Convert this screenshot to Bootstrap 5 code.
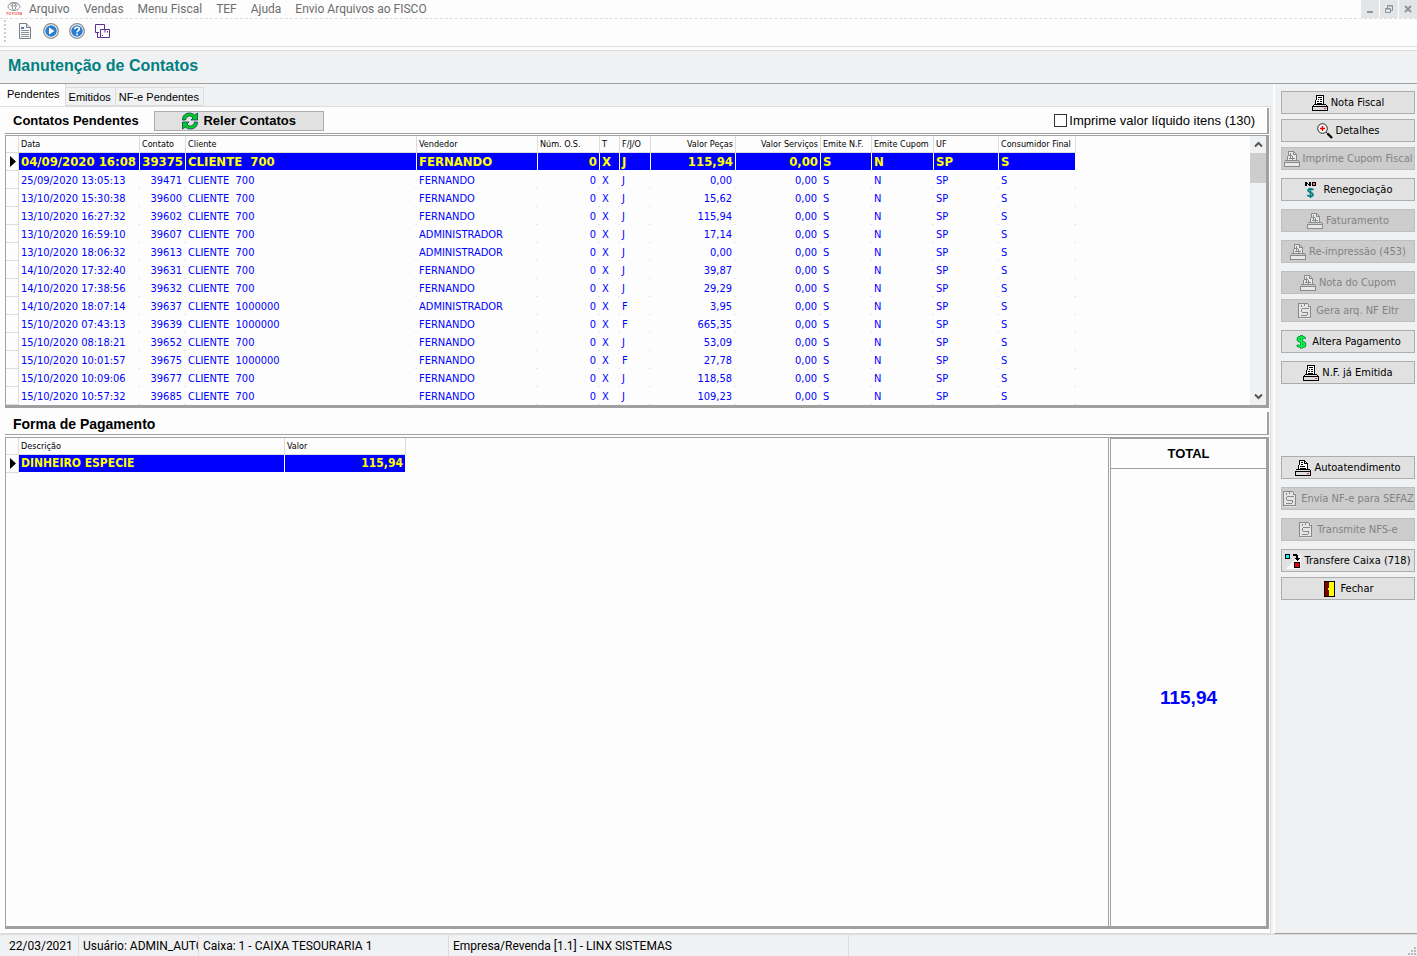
<!DOCTYPE html>
<html lang="pt-BR">
<head>
<meta charset="utf-8">
<meta name="viewport" content="width=device-width, initial-scale=1">
<title>Manutenção de Contatos</title>
<link rel="stylesheet" href="https://cdn.jsdelivr.net/npm/bootstrap@5.3.0/dist/css/bootstrap.min.css">
<script src="https://cdn.jsdelivr.net/npm/bootstrap@5.3.0/dist/js/bootstrap.bundle.min.js"></script>
<style>
:root{--face:#f0f1f3;--paper:#fdfdfd;--edge:#a0a0a0;--soft:#dcdcdc;--tahoma:"DejaVu Sans Condensed","DejaVu Sans",sans-serif;--arial:"Liberation Sans",Arial,sans-serif;--segoe:Roboto,"Open Sans",sans-serif}
body{background:var(--face);color:#000;font-family:var(--tahoma);font-size:11px;line-height:16px}
svg{display:block;flex:none}
.menubar{height:19px;background:var(--paper);border-bottom:1px dashed #ddd;font:12px/18px var(--segoe)}
.menubar .nav{padding-left:0}
.menubar .nav-link{color:#6d6d6d;padding:0 7px}
.menubar .logo{margin-left:6px}
.winbtns{gap:1px}
.winbtn{width:18px;height:18px;border:0;padding:0;background:#e3e5e7;display:grid;place-items:center}
.toolstrip{height:28px;background:var(--paper);border-bottom:1px solid var(--soft);padding:0 0 3px 4px;gap:10px}
.toolstrip .grip{border-left:2px dotted #ccc;height:22px;margin-right:2px}
.toolstrip button{border:0;padding:0;background:none}
.titlebar{height:37px;border-top:3px solid var(--paper);border-bottom:1px solid var(--edge);box-shadow:inset 0 1px #ddd}
.titlebar h1{font:bold 16px/32px var(--arial);color:#008080;margin:0;padding-left:8px}
.content-area{min-width:0}
.tabs{height:22px;font:11px/18px var(--arial)}
.tabs .nav-link{color:#000;padding:0 4px 0 3px;border:1px solid var(--soft);border-left:0;border-radius:0;height:19px;background:var(--face)}
.tabs .nav-link.active{height:22px;padding:1px 5px 1px 7px;background:var(--paper);border-top:0;border-bottom:0;line-height:19px}
.sheet{background:var(--paper);border:1px solid var(--soft);border-left:0;padding:1px 1px 0 5px}
.sect{border-bottom:1px solid var(--edge);border-right:2px solid var(--edge);padding:0 12px 0 8px;margin-bottom:2px}
.sect h2{font:bold 13px/20px var(--arial);margin:0}
.sect-top{height:26px;gap:15px;margin-bottom:1px}
.sect-pay{height:23px;padding-top:2px}
.sect-pay h2{font-size:14px}
.reload{width:170px;height:20px;border:1px solid #adadad;background:#e1e1e1;padding:0;font:bold 13px/18px var(--arial);gap:4px}
.liquid{font:13px/18px var(--arial);gap:2px}
.liquid input{appearance:none;width:13px;height:13px;border:1px solid #333;background:#fff;margin:0}
.liquid input:checked{background:#06c}
.frame{border:1px solid var(--edge);border-right:3px solid var(--edge);border-bottom:3px solid var(--edge)}
.paylist{border-right:1px solid var(--edge)}
.grid-tbl{table-layout:fixed;border-collapse:separate;border-spacing:0;color:#00f;white-space:pre}
#contacts{width:1070px}
#payments{width:400px}
.grid-tbl th{font-size:9px;font-weight:400;line-height:16px;height:17px;color:#000;padding:0 2px;border-right:1px solid var(--soft);border-bottom:1px solid var(--soft);overflow:hidden}
.grid-tbl td{height:18px;line-height:17px;padding:0 4px 0 2px;overflow:hidden;background:linear-gradient(#e6e6e6,#e6e6e6) no-repeat right bottom/2px 1px}
.grid-tbl td:first-child{background:none;border-right:1px solid var(--soft);border-bottom:1px solid var(--soft);padding:0 0 0 4px}
.grid-tbl .sel td+td{background:#00f;color:#ff0;font-weight:700;font-size:13px;border-right:1px solid #fff;border-bottom:1px solid #fff;padding-right:2px}
.grid-tbl .pay td+td{font-size:12px}
.c-mark{width:13px}.c-desc{width:266px}.c-val{width:121px}
.num{text-align:right}
.vbar{width:16px;background:var(--face)}
.vbar button{border:0;background:none;height:17px;padding:0;display:grid;place-items:center}
.vbar .thumb{height:30px;background:#cdcdcd}
.total{width:156px;border-left:1px solid var(--edge);margin-left:1px}
.total h3{font:bold 13px/29px var(--arial);margin:0;border-bottom:1px solid var(--edge);border-top:1px solid var(--edge)}
.total output{font:bold 19px/24px var(--arial);color:#00f}
.actions{width:144px;margin-left:2px;padding:7px 2px 0 6px;border-left:2px solid var(--paper);border-bottom:1px solid var(--edge)}
.act{width:100%;height:23px;border:1px solid #adadad;background:#e1e1e1;padding:0;margin-top:8px;font-size:11px;line-height:20px;gap:3px;color:#000;white-space:nowrap;display:flex;align-items:center;justify-content:center}
.act:first-child{margin-top:0}
.act.snug{margin-top:5px}
.act.apart{margin-top:72px}
.act:disabled{background:#ccc;border-color:#bfbfbf;color:#838383}
.status{height:22px;border-top:1px solid var(--soft);font:12px/23px var(--segoe);white-space:nowrap}
.status span{overflow:hidden;border-right:1px solid var(--soft);padding-left:4px}
.status .w-date{width:79px;padding-left:9px}.w-user{width:120px}.w-cash{width:250px}.w-firm{width:400px}
</style>
</head>
<body class="d-flex flex-column min-vh-100">
<svg width="0" height="0" class="position-absolute" aria-hidden="true">
 <symbol id="printer" viewBox="0 0 16 16" shape-rendering="crispEdges"><path d="M4 0h8v9H3V6h1z" fill="#fff"/><path d="M4 0h8v1H4zM4 1h1v4H4zM3 5h1v4H3zM11 1h1v8h-1zM6 2h4v1H6zM6 4h1v1H6zM8 4h2v1H8zM5 6h2v1H5zM8 6h2v1H8zM5 8h5v1H5z"/><path d="M1 9h14v6H0v-5h1z" fill="#ddd"/><path d="M2 9h12v1H2zM1 10h1v1H1zM14 10h1v1h-1zM0 11h16v1H0zM0 12h1v3H0zM15 12h1v3h-1zM0 15h16v1H0z"/><path d="M12 13h2v1h-2z" fill="#e33"/></symbol>
 <symbol id="printer-page" viewBox="0 0 16 16" shape-rendering="crispEdges"><path d="M4 0h6l3 3v6H3z" fill="#fff"/><path d="M4 0h6v1H4zM4 1h1v4H4zM3 5h1v4H3zM9 1h1v3H9zM10 3h3v1h-3zM10 1h1v1h-1zM11 2h1v1h-1zM12 4h1v5h-1zM6 2h2v1H6zM6 4h2v1H6zM5 6h5v1H5zM5 8h6v1H5z"/><path d="M1 9h14v6H0v-5h1z" fill="#ddd"/><path d="M1 9h14v1H1zM0 11h16v1H0zM0 12h1v3H0zM15 10h1v5h-1zM0 15h16v1H0z"/><path d="M12 13h2v1h-2z" fill="#e33"/></symbol>
 <symbol id="printer-off" viewBox="0 0 16 16" shape-rendering="crispEdges"><path d="M4 1h6l3 3v5H3zM0 11h16v5H0z" fill="#e8e8e8"/><path d="M4 0h6v1H4zM4 1h1v4H4zM3 5h1v4H3zM9 1h1v3H9zM10 3h3v1h-3zM10 1h1v1h-1zM11 2h1v1h-1zM12 4h1v5h-1zM6 2h1v6H6zM8 5h1v4H8zM5 4h3v1H5zM5 7h6v1H5zM1 9h14v1H1zM0 11h16v1H0zM0 12h1v3H0zM15 10h1v5h-1zM0 15h16v1H0z" fill="#8a8a8a"/></symbol>
 <symbol id="file-off" viewBox="0 0 16 16" shape-rendering="crispEdges"><path d="M2 1h9l3 3v12H2z" fill="#e4e4e4"/><path d="M1 0h10v1H1zM1 1h1v14H1zM11 1h1v3h-1zM12 3h2v1h-2zM13 4h1v11h-1zM1 14h13v1H1zM4 2h1v2H4zM7 1h1v2H7zM5 5h7v1H5zM4 6h1v3H4zM5 9h5v1H5zM10 9h1v3h-1zM4 12h6v1H4z" fill="#8a8a8a"/></symbol>
</svg>

<header>
 <nav class="menubar d-flex">
  <svg class="logo" width="16" height="18" viewBox="0 0 16 18"><g fill="none" stroke="#999"><ellipse cx="8" cy="6.500" rx="6" ry="4"/><ellipse cx="8" cy="4.500" rx="4" ry="1.600"/><ellipse cx="8" cy="6.500" rx="1.800" ry="3.600"/></g><text x="0" y="14.500" font-size="4" font-weight="bold" font-family="Liberation Sans" fill="#e55">TOYOTA</text></svg>
  <div class="nav flex-grow-1">
   <a class="nav-link" href="#">Arquivo</a><a class="nav-link" href="#">Vendas</a><a class="nav-link" href="#">Menu Fiscal</a><a class="nav-link" href="#">TEF</a><a class="nav-link" href="#">Ajuda</a><a class="nav-link" href="#">Envio Arquivos ao FISCO</a>
  </div>
  <div class="winbtns d-flex">
   <button class="winbtn" aria-label="Minimizar"><svg width="10" height="10"><path d="M2 8h6" stroke="#8795a1" stroke-width="2"/></svg></button>
   <button class="winbtn" aria-label="Restaurar"><svg width="10" height="10" fill="none" stroke="#8795a1"><path d="M1.500 4.500h5v4h-5zM1 5h6M3.500 4V1.500h5v5H7M3 2h6"/></svg></button>
   <button class="winbtn" aria-label="Fechar janela"><svg width="10" height="10"><path d="M2 2l6 6M8 2L2 8" stroke="#8795a1" stroke-width="2"/></svg></button>
  </div>
 </nav>
 <div class="toolstrip d-flex align-items-center">
  <span class="grip"></span>
  <button aria-label="Documento"><svg width="15" height="17" viewBox="0 0 15 17"><path d="M1.500.5h7l4 4v11h-11z" fill="#f6f8fa" stroke="#7a7f88"/><path d="M8.500.5v4h4" fill="#ddd" stroke="#7a7f88"/><path d="M3 4h3v2H3z" fill="#5d7f9f"/><path d="M3 7.500h8M3 9.500h8M3 11.500h8M3 13.500h8" stroke="#8b929c"/></svg></button>
  <button aria-label="Executar"><svg width="16" height="16" viewBox="0 0 16 16"><circle cx="8" cy="8" r="7.300" fill="#fff" stroke="#8a8a8a" stroke-width="1.300"/><circle cx="8" cy="8" r="5.800" fill="#2b7fd0"/><path d="M6 4.500L11.500 8 6 11.500z" fill="#fff"/></svg></button>
  <button aria-label="Ajuda"><svg width="16" height="16" viewBox="0 0 16 16"><circle cx="8" cy="8" r="7.300" fill="#fff" stroke="#8a8a8a" stroke-width="1.300"/><circle cx="8" cy="8" r="5.800" fill="#2b7fd0"/><path d="M5.800 6.300C5.800 3.600 10.300 3.600 10.300 6.200 10.300 7.700 8 7.600 8 9.500M8 10.500v1.700" fill="none" stroke="#fff" stroke-width="1.600"/></svg></button>
  <button aria-label="Janelas"><svg width="16" height="16" viewBox="0 0 16 16" fill="none" stroke="#5c2d91"><path d="M4 9.500H.5v-8h9V6M2.500 10v4.500H5M5.500 6.500h9v8h-9zM10 7v2.500M12.500 8v1.500M7 12.500h1"/></svg></button>
 </div>
 <div class="titlebar"><h1>Manutenção de Contatos</h1></div>
</header>

<main class="d-flex flex-grow-1">
 <section class="content-area d-flex flex-column flex-grow-1">
  <nav class="nav tabs align-items-end">
   <a class="nav-link active" href="#">Pendentes</a><a class="nav-link" href="#">Emitidos</a><a class="nav-link" href="#">NF-e Pendentes</a>
  </nav>
  <div class="sheet d-flex flex-column flex-grow-1">
   <div class="sect sect-top d-flex align-items-center">
    <h2>Contatos Pendentes</h2>
    <button class="reload d-flex align-items-center justify-content-center"><svg width="18" height="18" viewBox="0 0 18 18"><g stroke="#002b50" stroke-width=".7" fill="#0c2"><path d="M1.500 8C1.500 3 5 1 8.500 1 11 1 12.500 2 13.500 3L16.500 1v7H10l2-2C11 4.500 9.500 4 8.500 4 6.500 4 5 5.500 4.500 8z"/><path d="M16.500 10c0 5-3.500 7-7 7-2.500 0-4-1-5-2L1.500 17v-7H8l-2 2c1 1.500 2.500 2 3.500 2 2 0 3.500-1.500 4-4z"/></g></svg>Reler Contatos</button>
    <label class="liquid d-flex align-items-center ms-auto"><input type="checkbox">Imprime valor líquido itens (130)</label>
   </div>
   <div class="frame d-flex">
    <div class="flex-grow-1 overflow-hidden">
     <table class="grid-tbl" id="contacts">
      <colgroup></colgroup>
      <thead><tr><th></th><th>Data</th><th>Contato</th><th>Cliente</th><th>Vendedor</th><th>Núm. O.S.</th><th>T</th><th>F/J/O</th><th class="num">Valor Peças</th><th class="num">Valor Serviços</th><th>Emite N.F.</th><th>Emite Cupom</th><th>UF</th><th>Consumidor Final</th></tr></thead>
      <tbody></tbody>
     </table>
    </div>
    <div class="vbar d-flex flex-column">
     <button aria-label="Subir"><svg width="9" height="7"><path d="M1 5.500L4.500 2 8 5.500" fill="none" stroke="#555" stroke-width="2"/></svg></button>
     <div class="thumb"></div>
     <button class="mt-auto" aria-label="Descer"><svg width="9" height="7"><path d="M1 1.500L4.500 5 8 1.500" fill="none" stroke="#555" stroke-width="2"/></svg></button>
    </div>
   </div>
   <div class="sect sect-pay mt-1"><h2>Forma de Pagamento</h2></div>
   <div class="frame d-flex flex-grow-1 mb-1">
    <div class="paylist flex-grow-1">
     <table class="grid-tbl" id="payments">
      <colgroup><col class="c-mark"><col class="c-desc"><col class="c-val"></colgroup>
      <thead><tr><th></th><th>Descrição</th><th>Valor</th></tr></thead>
      <tbody><tr class="sel pay"><td><svg width="7" height="11"><path d="M0 0l6 5.500-6 5.500z"/></svg></td><td>DINHEIRO ESPECIE</td><td class="num">115,94</td></tr></tbody>
     </table>
    </div>
    <div class="total d-flex flex-column text-center">
     <h3>TOTAL</h3>
     <div class="flex-grow-1 d-flex align-items-center justify-content-center"><output>115,94</output></div>
    </div>
   </div>
  </div>
 </section>
 <aside class="actions flex-shrink-0">
  <button class="act"><svg width="16" height="16"><use href="#printer"/></svg>Nota Fiscal</button>
  <button class="act snug"><svg width="16" height="16" viewBox="0 0 16 16"><circle cx="5.500" cy="5.500" r="4.800" fill="#fff" stroke="#222"/><path d="M5.500 3v5M3 5.500h5" stroke="#e00" stroke-width="1.400"/><path d="M9 9l2 2" stroke="#222"/><path d="M10.500 10.500L15 15" stroke="#000" stroke-width="2.400"/></svg>Detalhes</button>
  <button class="act snug" disabled><svg width="16" height="16"><use href="#printer-off"/></svg>Imprime Cupom Fiscal</button>
  <button class="act"><svg width="17" height="16" viewBox="0 0 17 16"><path d="M1 0h2l2 3V0h2v4H5L3 2v2H1zM8 0h4v4H8z" shape-rendering="crispEdges"/><path d="M9 1h2v2H9z" fill="#f66"/><path d="M9.500 8C8.500 6.300 4 6.500 4 8.600 4 11 9 10 9 12.400 9 14.800 4.500 14.600 3.200 13M6.500 6v10" fill="none" stroke="#008080" stroke-width="1.700"/></svg>Renegociação</button>
  <button class="act" disabled><svg width="16" height="16"><use href="#printer-off"/></svg>Faturamento</button>
  <button class="act" disabled><svg width="16" height="16"><use href="#printer-off"/></svg>Re-impressão (453)</button>
  <button class="act" disabled><svg width="16" height="16"><use href="#printer-off"/></svg>Nota do Cupom</button>
  <button class="act snug" disabled><svg width="16" height="16"><use href="#file-off"/></svg>Gera arq. NF Eltr</button>
  <button class="act"><svg width="14" height="16" viewBox="0 0 14 16"><path d="M10 5C9 2.500 3 2.500 3 5.300 3 8.500 10 7 10 10.400 10 13.300 3.500 13.300 2.500 10.800M6.500 1v13.500" fill="none" stroke="#067a3a" stroke-width="2.800"/><path d="M9.700 4.800C8.500 2.700 3.200 2.700 3.200 5.300 3.200 8.300 9.800 7 9.800 10.400 9.800 13 4 13 2.800 10.800M6.500 1.400v12.700" fill="none" stroke="#0f4" stroke-width="1.600"/></svg>Altera Pagamento</button>
  <button class="act"><svg width="16" height="16"><use href="#printer"/></svg>N.F. já Emitida</button>
  <button class="act apart"><svg width="16" height="16"><use href="#printer-page"/></svg>Autoatendimento</button>
  <button class="act" disabled><svg width="16" height="16"><use href="#file-off"/></svg>Envia NF-e para SEFAZ</button>
  <button class="act" disabled><svg width="16" height="16"><use href="#file-off"/></svg>Transmite NFS-e</button>
  <button class="act"><svg width="16" height="16" viewBox="0 0 16 16" shape-rendering="crispEdges"><path d="M0 16L16 0v16z" fill="#f8f8f8"/><path d="M0 1h5v5H0zM9 9h6v6H9zM8 1h4v1h1v3h2v1h-1v1h-1v1h-1V7h-1V6h-1V5h1V3H8z"/><path d="M1 2h3v3H1z" fill="#0ff"/><path d="M10 10h4v4h-4z" fill="#e00"/></svg>Transfere Caixa (718)</button>
  <button class="act snug"><svg width="15" height="16" viewBox="0 0 15 16" shape-rendering="crispEdges"><path d="M2 0h11v16H2z"/><path d="M7 1h5v14H7z" fill="#ff0"/><path d="M3 1h3v1h1v13H3z" fill="#800000"/><path d="M6 7h1v2H6z" fill="#ff0"/></svg>Fechar</button>
 </aside>
</main>

<footer class="status d-flex position-relative">
 <span class="w-date">22/03/2021</span><span class="w-user">Usuário: ADMIN_AUTO</span><span class="w-cash">Caixa: 1 - CAIXA TESOURARIA 1</span><span class="w-firm">Empresa/Revenda [1.1] - LINX SISTEMAS</span>
 <svg class="position-absolute bottom-0 end-0" width="9" height="9" fill="#bbb"><path d="M6 0h2v2H6zM3 3h2v2H3zM6 3h2v2H6zM0 6h2v2H0zM3 6h2v2H3zM6 6h2v2H6z"/></svg>
</footer>

<script>
const widths=[13,121,46,231,121,62,20,31,85,85,51,62,65,77];
const F='FERNANDO',A='ADMINISTRADOR',C='CLIENTE  700',M='CLIENTE  1000000';
const rows=[
['04/09/2020 16:08',39375,C,F,'J','115,94'],
['25/09/2020 13:05:13',39471,C,F,'J','0,00'],
['13/10/2020 15:30:38',39600,C,F,'J','15,62'],
['13/10/2020 16:27:32',39602,C,F,'J','115,94'],
['13/10/2020 16:59:10',39607,C,A,'J','17,14'],
['13/10/2020 18:06:32',39613,C,A,'J','0,00'],
['14/10/2020 17:32:40',39631,C,F,'J','39,87'],
['14/10/2020 17:38:56',39632,C,F,'J','29,29'],
['14/10/2020 18:07:14',39637,M,A,'F','3,95'],
['15/10/2020 07:43:13',39639,M,F,'F','665,35'],
['15/10/2020 08:18:21',39652,C,F,'J','53,09'],
['15/10/2020 10:01:57',39675,M,F,'F','27,78'],
['15/10/2020 10:09:06',39677,C,F,'J','118,58'],
['15/10/2020 10:57:32',39685,C,F,'J','109,23']];
const t=document.getElementById('contacts');
t.querySelector('colgroup').innerHTML=widths.map(w=>`<col style="width:${w}px">`).join('');
const right=[1,4,7,8];
t.tBodies[0].innerHTML=rows.map((r,i)=>{
 const c=[r[0],r[1],r[2],r[3],'0','X',r[4],r[5],'0,00','S','N','SP','S'];
 return `<tr${i?'':' class="sel"'}><td>${i?'':'<svg width="7" height="11"><path d="M0 0l6 5.500-6 5.500z"/></svg>'}</td>`+c.map((v,k)=>`<td${right.includes(k)?' class="num"':''}>${v}</td>`).join('')+'</tr>';
}).join('');
</script>
</body>
</html>
